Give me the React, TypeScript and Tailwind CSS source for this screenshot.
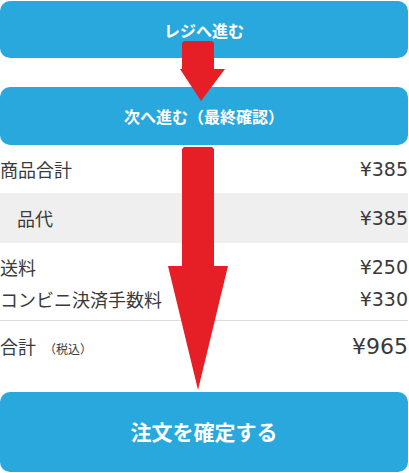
import React from 'react';

const jp = { fontFamily: '"Noto Sans CJK JP", "Noto Sans", sans-serif' };
const num = { fontFamily: '"DejaVu Sans", "Noto Sans CJK JP", sans-serif' };

type Line = { label: string; price: string };

const fees: Line[] = [
  { label: '送料', price: '¥250' },
  { label: 'コンビニ決済手数料', price: '¥330' },
];

function ActionButton({ label, className }: { label: string; className: string }) {
  return (
    <button
      className={`w-full flex items-center justify-center rounded-[10px] bg-[#29a8dd] text-white font-bold ${className}`}
    >
      {label}
    </button>
  );
}

function Price({ value, className = 'text-[19px]' }: { value: string; className?: string }) {
  return (
    <span className={className} style={num}>
      {value}
    </span>
  );
}

export default function App() {
  return (
    <div className="relative w-[409px] h-[473px] bg-white overflow-hidden text-[#3a3a3a]" style={jp}>
      <div className="flex flex-col pt-[1px] pr-[1px]">
        <ActionButton label="レジへ進む" className="h-[57px] text-[16px]" />
        <ActionButton label="次へ進む（最終確認）" className="h-[58px] mt-[29px] text-[16px]" />

        {/* order summary */}
        <div className="flex items-center justify-between h-[48px] text-[18px]">
          <span>商品合計</span>
          <Price value="¥385" />
        </div>
        <div className="flex items-center justify-between h-[50px] bg-[#efefef] text-[18px] pl-[17px]">
          <span>品代</span>
          <Price value="¥385" />
        </div>
        <div className="flex flex-col pt-[8px] pb-[5px] border-b border-[#dcdcdc]">
          {fees.map((f) => (
            <div key={f.label} className="flex items-center justify-between h-[32px] text-[18px]">
              <span>{f.label}</span>
              <Price value={f.price} />
            </div>
          ))}
        </div>
        <div className="flex items-center justify-between h-[50px]">
          <span className="text-[18px]">
            合計<span className="text-[12px] ml-[8px]">（税込）</span>
          </span>
          <Price value="¥965" className="text-[22px]" />
        </div>

        <ActionButton label="注文を確定する" className="h-[80px] mt-[21px] text-[21px]" />
      </div>

      {/* red guide arrows */}
      <svg className="absolute inset-0 pointer-events-none" width="409" height="473" viewBox="0 0 409 473">
        <polygon
          points="184,41 212,41 214,43 214,69 225,69 201,101 180,69 182,69 182,43"
          fill="#e61e26"
        />
        <polygon
          points="184,147 212,147 214,149 214,266 228,266 198,390 168,266 182,266 182,149"
          fill="#e61e26"
        />
      </svg>
    </div>
  );
}
